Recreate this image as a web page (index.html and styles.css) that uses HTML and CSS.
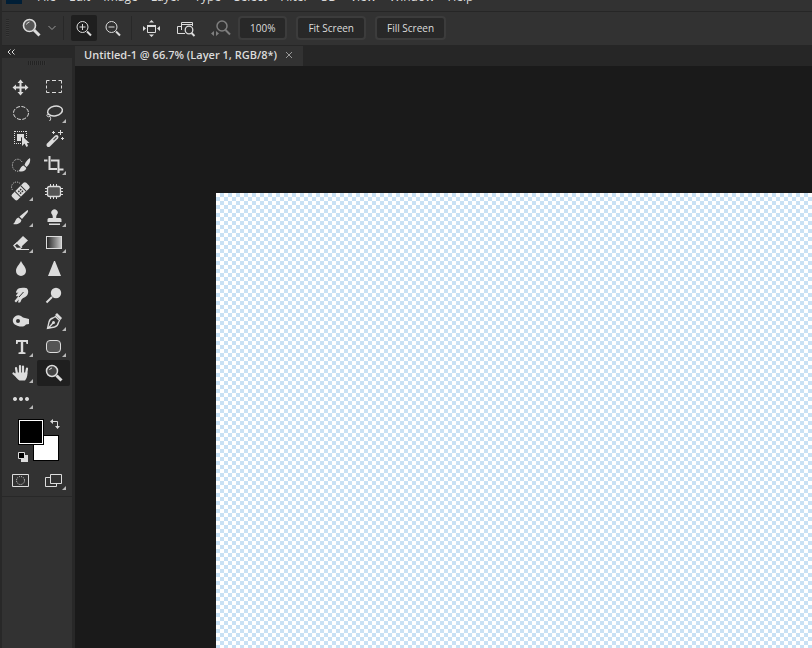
FILE: index.html
```html
<!DOCTYPE html>
<html lang="en">
<head>
<meta charset="utf-8">
<title>Untitled-1</title>
<link rel="stylesheet" href="styles.css">
</head>
<body>
<div class="app">
  <header class="menubar">
    <span class="logo"></span>
    <nav class="menu">
      <a href="#">File</a><a href="#">Edit</a><a href="#">Image</a><a href="#">Layer</a><a href="#">Type</a><a href="#">Select</a><a href="#">Filter</a><a href="#">3D</a><a href="#">View</a><a href="#">Window</a><a href="#">Help</a>
    </nav>
  </header>

  <div class="options">
    <span class="grip"></span>
    <button class="preset" aria-label="Tool preset">
      <svg class="icon" viewBox="0 0 24 24"><circle cx="10.500" cy="9.500" r="6" fill="#555" stroke="#dcdcdc" stroke-width="1.600"/><path d="M7.500 8.500a3.500 3.500 0 0 1 3-2.500" class="l"/><path d="M15 14l5.500 5.500" class="l3"/></svg>
      <svg class="chevron" viewBox="0 0 8 6"><path d="M.5 1l3.500 3.500L7.500 1" class="g"/></svg>
    </button>
    <span class="rule"></span>
    <button class="opt active" aria-label="Zoom in">
      <svg class="icon" viewBox="0 0 24 24"><circle cx="10.500" cy="11" r="5.500" class="l"/><path d="M7.500 11h6M10.500 8v6" class="l"/><path d="M15 15.500l4 4" class="l2"/></svg>
    </button>
    <button class="opt" aria-label="Zoom out">
      <svg class="icon" viewBox="0 0 24 24"><circle cx="10.500" cy="11" r="5.500" class="l"/><path d="M7.500 11h6" class="l"/><path d="M15 15.500l4 4" class="l2"/></svg>
    </button>
    <span class="rule snug"></span>
    <button class="opt wide" aria-label="Resize windows to fit">
      <svg class="icon" viewBox="0 0 24 24"><path d="M8.500 9.500h8v7h-8z" class="l"/><path d="M8 9h9v2H8zM10 6.500h5L12.500 4zM10 18.500h5L12.500 21zM4 10v5l3-2.500zM21 10v5l-3-2.500z" class="f"/></svg>
    </button>
    <button class="opt wide" aria-label="Zoom all windows">
      <svg class="icon" viewBox="0 0 24 24"><path d="M11 17.500H3.500v-7H8M7.500 14V6.500h11V10M7.500 8.500h11" class="l"/><circle cx="15" cy="14" r="3.800" fill="#323232" stroke="#dcdcdc" stroke-width="1.300"/><path d="M17.500 17l3 3" class="l2"/></svg>
    </button>
    <button class="opt wide dim" aria-label="Scrubby zoom" disabled>
      <svg class="icon" viewBox="0 0 24 24"><circle cx="13" cy="10" r="5" class="l" stroke-width="1.500"/><path d="M16.500 14l4.500 4.500" class="l2"/><path d="M5 15v5l-3-2.500zM7 15v5l3-2.500z" class="f"/></svg>
    </button>
    <div class="actions">
      <button class="action">100%</button><button class="action">Fit Screen</button><button class="action">Fill Screen</button>
    </div>
  </div>

  <div class="work">
    <aside class="dock">
      <button class="collapse" aria-label="Collapse"><svg viewBox="0 0 8 6"><path d="M3.500.5L1 3l2.500 2.500M7.500.5L5 3l2.500 2.500" class="l"/></svg></button>
      <span class="handle"></span>
      <div class="tools">
        <button class="tool" aria-label="Move"><svg class="icon" viewBox="0 0 24 24"><path d="M5 12.500h13M11.500 6v13" class="l2"/><path d="M8.500 8h6l-3-3.500zM8.500 17h6l-3 3.500zM7 9.500v6l-3.500-3zM16 9.500v6l3.500-3z" class="f"/></svg></button>
        <button class="tool" aria-label="Marquee"><svg class="icon" viewBox="0 0 24 24"><path d="M4.500 8.500v-3h3M10 5.500h4M16.500 5.500h3v3M19.500 10.500v3M19.500 15.500v2h-3M14 17.500h-4M7.500 17.500h-3v-2M4.500 13.500v-3" class="l"/></svg></button>
        <button class="tool" aria-label="Ellipse marquee"><svg class="icon" viewBox="0 0 24 24"><ellipse cx="12" cy="12" rx="7.500" ry="6.500" class="l" stroke-dasharray="4 1.500"/></svg></button>
        <button class="tool fly" aria-label="Lasso"><svg class="icon" viewBox="0 0 24 24"><ellipse cx="13" cy="10" rx="7.500" ry="4.800" class="l" stroke-width="1.500" transform="rotate(-12 13 10)"/><path d="M6 13c-2 1-1 3 1 2.800 2-.3 2-2 .5-2.600M8 15.500c1 1.500 1 3-.5 4.500" class="l"/></svg></button>
        <button class="tool" aria-label="Object selection"><svg class="icon" viewBox="0 0 24 24"><path d="M5.500 4v13M5 16.500h9M17.500 4v8M6 4.500h12" class="l" stroke-dasharray="1 1"/><path d="M8 7h7v5l-3-2v4H8z" class="f"/><path d="M13 9v10l2.500-2.500 2 3.500 1.500-1-1-3h2.500z" class="f"/></svg></button>
        <button class="tool" aria-label="Magic wand"><svg class="icon" viewBox="0 0 24 24"><path d="M6.500 18l8-8" stroke="#dcdcdc" stroke-width="4" stroke-linecap="round"/><path d="M11.500 13l3-3" stroke="#555" stroke-width="1.200"/><path d="M11.500 4v3M10 5.500h3M18.500 3v5M16 5.500h5M20.500 10v3M19 11.500h3" class="l"/></svg></button>
        <button class="tool" aria-label="Quick selection"><svg class="icon" viewBox="0 0 24 24"><path d="M13 9a5.200 6 0 1 0-3 9" class="l" stroke-dasharray="1 1.200"/><path d="M21 5c.8 4-1 7-3.500 9l-2-2c1-3 3-5.500 5.500-7zM14.500 12.500l2.800 2.500c-.5 3-4 4.500-7.800 3 2-1 1.500-4.500 5-5.500z" class="f"/></svg></button>
        <button class="tool fly" aria-label="Crop"><svg class="icon" viewBox="0 0 24 24"><path d="M7.500 3v13H15M9 7.500h7.500V20M2 7.500h3.500M17 16.500h4.500" class="l2"/></svg></button>
        <button class="tool fly" aria-label="Healing brush"><svg class="icon" viewBox="0 0 24 24"><path d="M11 4.500a4 4 0 0 0-7 7" class="l" stroke-dasharray="1 1.200"/><g transform="rotate(-45 12 12)"><rect x="1.500" y="8" width="20" height="8" rx="2" class="f"/><path d="M7.500 8v8M15.500 8v8" stroke="#323232"/><path d="M9.500 10H11v1.500H9.500zM12 10h1.500v1.500H12zM9.500 12.500H11V14H9.500zM12 12.500h1.500V14H12z" fill="#323232"/></g></svg></button>
        <button class="tool" aria-label="Frame"><svg class="icon" viewBox="0 0 24 24"><rect x="5.500" y="7.500" width="13" height="10" rx="2" fill="#555" stroke="#dcdcdc" stroke-width="1.300"/><path d="M8.500 5v3M11.500 5v3M14.500 5v3M8.500 17v3M11.500 17v3M14.500 17v3M3 9.500h3M3 12.500h3M3 15.500h3M18 9.500h3M18 12.500h3M18 15.500h3" class="l"/></svg></button>
        <button class="tool fly" aria-label="Brush"><svg class="icon" viewBox="0 0 24 24"><path d="M18.500 5c1 .5.500 1.500 0 2.500L13 14l-2.500-2.500zM9.500 12.500l2.800 2.500c0 3-4 5-8.300 4 2.500-1 2-5.500 5.500-6.500z" class="f"/></svg></button>
        <button class="tool fly" aria-label="Clone stamp"><svg class="icon" viewBox="0 0 24 24"><path d="M10 9.500a3.200 3.200 0 1 1 5 0c-.6 1-.8 2-.8 3.500H18q1.500 0 1.500 1.500V17h-14v-2.500Q5.500 13 7 13h3.800c0-1.500-.2-2.500-.8-3.500zM7 18.500h11V20H7z" class="f"/></svg></button>
        <button class="tool fly" aria-label="Eraser"><svg class="icon" viewBox="0 0 24 24"><path d="M14 5l5 4.500L11 17H7.500L5 14z" class="f"/><path d="M8 12l4.500 4-1.500 1.500H7.500L5 14.500z" fill="#323232" stroke="#dcdcdc" stroke-width="1.400"/><path d="M7 18.500h13" class="l"/></svg></button>
        <button class="tool fly" aria-label="Gradient"><svg class="icon" viewBox="0 0 24 24"><defs><linearGradient id="fade"><stop stop-color="#222"/><stop offset="1" stop-color="#ccc"/></linearGradient></defs><rect x="4.500" y="5.500" width="15" height="12" fill="url(#fade)" stroke="#dcdcdc"/></svg></button>
        <button class="tool" aria-label="Blur"><svg class="icon" viewBox="0 0 24 24"><path d="M12 4c1.500 3.500 5 6 5 10a5 5 0 0 1-10 0c0-4 3.500-6.500 5-10z" class="f"/></svg></button>
        <button class="tool" aria-label="Sharpen"><svg class="icon" viewBox="0 0 24 24"><path d="M12 4h1l6 15H6z" class="f"/></svg></button>
        <button class="tool" aria-label="Smudge"><svg class="icon" viewBox="0 0 24 24"><path d="M8 7c1-2 4-2.500 9-2 2.500.5 3 5 1 7.500-2 2-3.500 2-5 3.500-1 1-1 2.500-2 3.500H9l.8-3L7 19.500 5.500 18l4-5c-1 .5-2.500.5-2.500-.5L9.500 9C7.500 11 6 9.500 8 7z" class="f"/><path d="M14.500 9L10 14" stroke="#323232"/></svg></button>
        <button class="tool" aria-label="Dodge"><svg class="icon" viewBox="0 0 24 24"><circle cx="14" cy="10" r="5.200" class="f"/><path d="M10 14l-5.500 5.500" class="l2"/></svg></button>
        <button class="tool" aria-label="Sponge"><svg class="icon" viewBox="0 0 24 24"><path d="M4 10c1.500-3 5-5 8-3l2 1.500L20 10v5l-3 .5c-2 2.500-5 2.500-8 1.500-3-1-6-3-5-7z" class="f"/><circle cx="9" cy="12" r="2" fill="#323232"/></svg></button>
        <button class="tool fly" aria-label="Pen"><svg class="icon" viewBox="0 0 24 24"><path d="M13.500 7.500l4 4-1 2c-.5 2.500-2 4-4 4.500l-7 1.500L7 13c.5-2 2-3.500 4-4zM6 19.500l5-5.500" class="l" stroke-width="1.300"/><path d="M13 6l2-2 5 5-1.500 2z" class="f"/><circle cx="11.500" cy="13.500" r="1.500" class="f"/></svg></button>
        <button class="tool fly" aria-label="Type"><svg class="icon" viewBox="0 0 24 24"><path d="M7 5h12v4h-1.500l-.5-2h-2.800v10l2.300.5V19h-7v-1.500l2.300-.5V7H9l-.5 2H7z" class="f"/></svg></button>
        <button class="tool fly" aria-label="Rectangle"><svg class="icon" viewBox="0 0 24 24"><rect x="4.500" y="5.500" width="14" height="12" rx="3.500" fill="#555" stroke="#dcdcdc"/></svg></button>
        <button class="tool fly" aria-label="Hand"><svg class="icon" viewBox="0 0 24 24"><path d="M8 13L7 7M11 12V5M14 12V5.500M17 13l1-5.500M8.500 16l-4-3.500" stroke="#dcdcdc" stroke-width="2.200" stroke-linecap="round"/><path d="M7 11.500h11.500c0 4-1 6-2.500 8h-5.500c-2-1-4-4-5-6z" class="f"/></svg></button>
        <button class="tool selected" aria-label="Zoom"><svg class="icon" viewBox="0 0 24 24"><circle cx="10" cy="10" r="5.500" fill="#444" stroke="#dcdcdc" stroke-width="1.500"/><path d="M7.500 9a3 3 0 0 1 2.500-2" class="l"/><path d="M14.500 14.500l5 5" class="l3"/></svg></button>
        <button class="tool fly" aria-label="More tools"><svg class="icon" viewBox="0 0 24 24"><path d="M6 10a2 2 0 1 0 .01 0zM12 10a2 2 0 1 0 .01 0zM18 10a2 2 0 1 0 .01 0z" class="f"/></svg></button>
      </div>
      <div class="colors">
        <button class="swatch back" aria-label="Background colour"></button>
        <button class="swatch front" aria-label="Foreground colour"></button>
        <button class="swap" aria-label="Swap colours"><svg viewBox="0 0 12 12"><path d="M3 3.500h5.500V9" class="l"/><path d="M4 1v5L1 3.500zM6 8h5l-2.500 3z" class="f"/></svg></button>
        <button class="reset" aria-label="Default colours"><svg viewBox="0 0 12 12"><path d="M4 4h7v7H4z" class="f"/><path d="M1.500 1.500h6v6h-6z" fill="#000" stroke="#dcdcdc"/></svg></button>
      </div>
      <div class="tools modes">
        <button class="tool" aria-label="Quick mask"><svg class="icon" viewBox="0 0 24 24"><path d="M3.500 6.500h16v12h-16z" class="l"/><circle cx="11.500" cy="12.500" r="4" class="l" stroke-dasharray="1 1.100"/></svg></button>
        <button class="tool fly" aria-label="Screen mode"><svg class="icon" viewBox="0 0 24 24"><path d="M8 9.500H3.500v9h11V15M8.500 6.500h11v9h-11z" class="l"/></svg></button>
      </div>
    </aside>

    <main class="document">
      <div class="tabs">
        <div class="tab"><span>Untitled-1 @ 66.7% (Layer 1, RGB/8*)</span><button class="close" aria-label="Close"><svg viewBox="0 0 8 8"><path d="M1 1l6 6M7 1L1 7" class="g"/></svg></button></div>
      </div>
      <div class="stage"><div class="artboard"></div></div>
    </main>
  </div>
</div>
</body>
</html>
```
FILE: styles.css
```css
* { box-sizing: border-box; }
body { margin: 0; background: #1a1a1a; color: #dcdcdc; font: 10px/14px "Open Sans", "Noto Sans", sans-serif; }
button { margin: 0; padding: 0; border: 0; background: none; color: inherit; font: inherit; }
svg { display: block; fill: none; }
.l { stroke: #dcdcdc; }
.l2 { stroke: #dcdcdc; stroke-width: 2; }
.l3 { stroke: #dcdcdc; stroke-width: 3; }
.g { stroke: #999; }
.f { fill: #dcdcdc; }
.icon { width: 24px; height: 24px; flex: none; }

.app { display: flex; flex-direction: column; height: 100vh; overflow: hidden; border-left: 2px solid #282828; }
.menubar { display: flex; align-items: flex-start; height: 12px; flex: none; overflow: hidden; background: #323232; border-bottom: 1px solid #262626; }
.logo { width: 16px; height: 4px; margin: 0 15px 0 4px; background: #001e36; }
.menu { display: flex; gap: 13px; margin-top: -11px; font-size: 12px; line-height: 16px; }
.menu a { color: #dcdcdc; text-decoration: none; }

.options { display: flex; align-items: center; height: 34px; flex: none; padding-bottom: 1px; background: #323232; border-bottom: 1px solid #262626; }
.grip { width: 3px; height: 18px; margin: 0 10px 0 4px; background: repeating-linear-gradient(#282828 0 1px, #383838 1px 2px); }
.preset { display: flex; align-items: center; gap: 5px; width: 42px; }
.chevron { width: 8px; height: 6px; flex: none; }
.rule { width: 1px; height: 24px; margin: 0 7px 0 2px; background: #282828; }
.rule.snug { margin: 0 3px 0 2px; }
.opt { display: grid; place-items: center; width: 26px; height: 26px; margin-right: 3px; border-radius: 2px; }
.opt.active { background: #1f1f1f; }
.opt.wide { width: 32px; }
.opt.dim { opacity: 0.45; margin: 0; }
.actions { display: flex; gap: 9px; margin-left: 1px; }
.action { height: 24px; padding: 0 10px; background: #282828; border: 2px solid #3c3c3c; border-radius: 4px; }

.work { display: flex; flex: 1; min-height: 0; }
.dock { display: flex; flex-direction: column; width: 73px; flex: none; background: #323232; border-right: 3px solid #282828; }
.collapse { display: flex; align-items: center; height: 12px; flex: none; padding-left: 5px; background: #282828; }
.collapse svg { width: 8px; height: 6px; }
.handle { width: 18px; height: 4px; flex: none; margin: 3px auto 9px; background: repeating-linear-gradient(90deg, #232323 0 1px, #363636 1px 2px); }
.tools { display: grid; grid-template-columns: 33px 33px; grid-auto-rows: 26px; padding-left: 2px; }
.tool { position: relative; display: grid; place-items: center; }
.tool.selected { background: #1f1f1f; border-radius: 2px; }
.fly::after { content: ""; position: absolute; right: 4px; bottom: 3px; border-left: 4px solid transparent; border-bottom: 4px solid #b8b8b8; }
.colors { position: relative; height: 55px; flex: none; }
.swatch { position: absolute; width: 26px; height: 26px; border: 1px solid #000; }
.front { left: 16px; top: 7px; background: #000; box-shadow: inset 0 0 0 1px #fff; }
.back { left: 31px; top: 23px; background: #fff; }
.swap, .reset { position: absolute; width: 12px; height: 12px; }
.swap { left: 47px; top: 6px; }
.reset { left: 15px; top: 39px; }
.modes { padding-bottom: 3px; border-bottom: 1px solid #282828; }

.document { display: flex; flex-direction: column; flex: 1; min-width: 0; }
.tabs { display: flex; height: 20px; flex: none; background: #262626; }
.tab { display: flex; align-items: center; gap: 8px; padding: 0 10px 2px 9px; background: #323232; font-size: 11px; font-weight: 600; }
.close svg { width: 8px; height: 8px; }
.stage { flex: 1; min-height: 0; padding: 127px 0 0 141px; background: #1a1a1a; }
.artboard { height: 100%; background: repeating-conic-gradient(#c9e1f4 0 25%, #fff 0 50%) 0 0 / 8px 8px; }
```
